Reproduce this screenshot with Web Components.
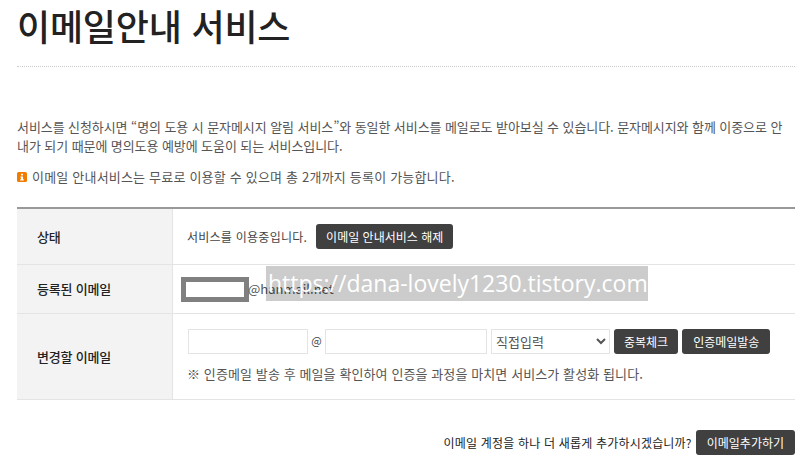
<!DOCTYPE html>
<html lang="ko">
<head>
<meta charset="utf-8">
<title>이메일안내 서비스</title>
<style>
  html, body { margin: 0; background: #fff; }
  body { font: 12px/20px "Noto Sans CJK KR", "Liberation Sans", sans-serif; color: #444; overflow: hidden; }
</style>
</head>
<body>
<mail-page>
  <page-title>이메일안내 서비스</page-title>
  <intro-text>서비스를 신청하시면 “명의 도용 시 문자메시지 알림 서비스”와 동일한 서비스를 메일로도 받아보실 수 있습니다. 문자메시지와 함께 이중으로 안내가 되기 때문에 명의도용 예방에 도움이 되는 서비스입니다.</intro-text>
  <info-note>이메일 안내서비스는 무료로 이용할 수 있으며 총 2개까지 등록이 가능합니다.</info-note>
  <form-table>
    <table-row label="상태" style="--row-h: 56px">
      <span>서비스를 이용중입니다.</span>
      <dark-button>이메일 안내서비스 해제</dark-button>
    </table-row>
    <table-row label="등록된 이메일" style="--row-h: 49px">
      <masked-email>@hanmail.net</masked-email>
    </table-row>
    <table-row label="변경할 이메일" style="--row-h: 86px">
      <email-form></email-form>
    </table-row>
  </form-table>
  <add-bar>
    <span>이메일 계정을 하나 더 새롭게 추가하시겠습니까?</span>
    <dark-button style="--pad: 11px">이메일추가하기</dark-button>
  </add-bar>
  <water-mark>https://dana-lovely1230.tistory.com</water-mark>
</mail-page>
<script>
function define(name, html, setup) {
  customElements.define(name, class extends HTMLElement {
    constructor() {
      super();
      this.attachShadow({ mode: "open" });
    }
    connectedCallback() {
      this.shadowRoot.innerHTML = html;
      if (setup) setup(this, this.shadowRoot);
    }
  });
}

define("mail-page", `
  <style>
    :host { display: block; position: relative; width: 778px; height: 460px; margin-left: 17px; }
  </style>
  <slot></slot>`);

define("page-title", `
  <style>
    :host {
      display: block; height: 66px; border-bottom: 1px dotted #ccc;
      font-size: 36px; line-height: 50px; font-weight: 500; color: #222; letter-spacing: -0.2px;
    }
  </style>
  <slot></slot>`);

define("intro-text", `
  <style>
    :host {
      display: block; margin-top: 50px; padding-right: 6px; font-size: 13px; line-height: 19px;
      color: #555; letter-spacing: -0.08px;
    }
  </style>
  <slot></slot>`);

define("info-note", `
  <style>
    :host { display: flex; align-items: center; gap: 5px; margin-top: 12px; height: 20px; font-size: 13px; color: #555; letter-spacing: .2px; }
    svg { width: 10px; height: 10px; flex: none; }
  </style>
  <svg viewBox="0 0 10 10" aria-hidden="true">
    <rect width="10" height="10" rx="1.5" fill="#f07c00"/>
    <rect x="4" y="1.8" width="2" height="1.6" fill="#fff"/>
    <path d="M3.4 4.4H6V7.2H6.8V8.4H3.2V7.2H4V5.5H3.4Z" fill="#fff"/>
  </svg>
  <slot></slot>`);

define("form-table", `
  <style>
    :host { display: block; margin-top: 20px; border-top: 2px solid #999; }
  </style>
  <slot></slot>`);

define("table-row", `
  <style>
    :host {
      display: grid; grid-template-columns: 156px 1fr; height: var(--row-h); box-sizing: border-box;
      border-bottom: 1px solid #e4e4e4;
    }
    .label {
      display: flex; align-items: center; padding-left: 20px; background: #f3f3f3;
      border-right: 1px solid #e4e4e4; font-size: 13px; font-weight: 500; color: #222; letter-spacing: -0.2px;
    }
    .cell { display: flex; align-items: center; gap: 9px; padding-left: 15px; }
    ::slotted(span) { letter-spacing: .25px; margin-left: -1px; }
  </style>
  <div class="label"></div>
  <div class="cell"><slot></slot></div>`,
  (el, root) => { root.querySelector(".label").textContent = el.getAttribute("label"); });

define("dark-button", `
  <style>
    :host { display: inline-block; flex: none; }
    button {
      display: block; height: 25px; padding: 0 var(--pad, 10px); border: 0; border-radius: 3px;
      background: #404040; color: #fff; font: 12px/25px "Noto Sans CJK KR", sans-serif; cursor: pointer;
    }
  </style>
  <button><slot></slot></button>`);

define("masked-email", `
  <style>
    :host { display: flex; align-items: center; margin-left: -7px; font-size: 13px; color: #555; }
    .mask { width: 58px; height: 15px; border: 5px solid #808080; background: #fff; flex: none; margin-right: -1px; }
  </style>
  <div class="mask"></div><slot></slot>`);

define("email-form", `
  <style>
    :host { display: block; }
    .fields { display: flex; align-items: center; }
    input, select {
      box-sizing: border-box; height: 25px; border: 1px solid #e4e4e4; background: #fff; padding: 0 4px;
      font: 12px "Noto Sans CJK KR", sans-serif; color: #555; border-radius: 0; outline: 0;
    }
    .id { width: 120px; }
    .at { width: 17px; text-align: center; font-size: 11px; color: #444; padding-bottom: 3px; }
    .domain { width: 162px; }
    select { width: 119px; margin: 0 4px; padding: 0; font-size: 13px; }
    .send { margin-left: 4px; --pad: 11px; }
    p { margin: 10px 0 0 -1px; font-size: 13px; line-height: 20px; color: #555; letter-spacing: .1px; }
  </style>
  <div class="fields">
    <input class="id" type="text">
    <span class="at">@</span>
    <input class="domain" type="text">
    <select><option>직접입력</option></select>
    <dark-button class="check">중복체크</dark-button>
    <dark-button class="send">인증메일발송</dark-button>
  </div>
  <p>※ 인증메일 발송 후 메일을 확인하여 인증을 과정을 마치면 서비스가 활성화 됩니다.</p>`);

define("add-bar", `
  <style>
    :host { display: flex; justify-content: flex-end; align-items: center; gap: 4px; margin-top: 30px; color: #222; }
    ::slotted(span) { letter-spacing: .19px; }
  </style>
  <slot></slot>`);

define("water-mark", `
  <style>
    :host {
      position: absolute; left: 249px; top: 266px; width: 382px; height: 35px; background: rgba(0,0,0,.2);
      color: #fff; font: 23px/34px "Open Sans", sans-serif; white-space: nowrap; padding-left: 2px; box-sizing: border-box; overflow: hidden;
    }
  </style>
  <slot></slot>`);
</script>
</body>
</html>
